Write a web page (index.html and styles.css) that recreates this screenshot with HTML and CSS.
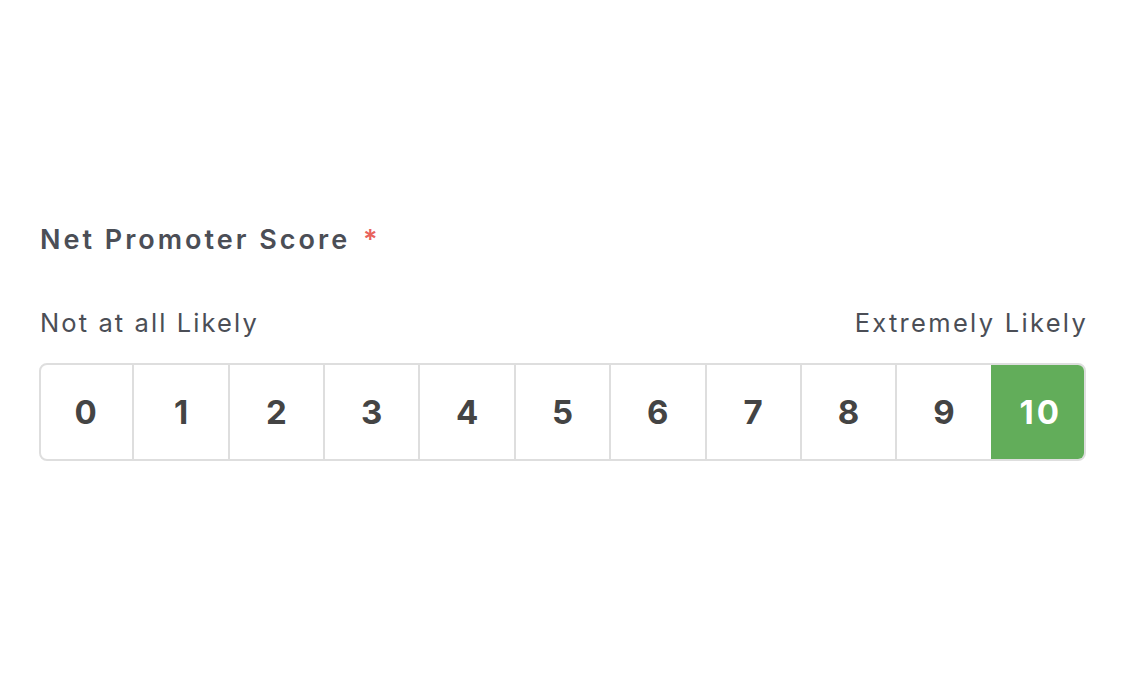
FILE: index.html
```html
<!DOCTYPE html>
<html>
<head>
<meta charset="utf-8">
<link rel="stylesheet" href="styles.css">
</head>
<body>
<div class="field">
  <div class="label">Net Promoter Score <span class="req">*</span></div>
  <div class="ends"><span>Not at all Likely</span><span>Extremely Likely</span></div>
  <div class="scale">
    <div class="row">
      <div class="cell">0</div>
      <div class="cell">1</div>
      <div class="cell">2</div>
      <div class="cell">3</div>
      <div class="cell">4</div>
      <div class="cell">5</div>
      <div class="cell">6</div>
      <div class="cell">7</div>
      <div class="cell">8</div>
      <div class="cell">9</div>
      <div class="cell active">10</div>
    </div>
  </div>
</div>
</body>
</html>
```
FILE: styles.css
```css
html, body {
  margin: 0;
  padding: 0;
  background: #fff;
}
body {
  font-family: Inter, "Noto Sans", sans-serif;
  color: #4b4e56;
}
.field {
  padding: 222px 48px 0 39px;
}
.label {
  font-size: 27px;
  font-weight: 600;
  line-height: 36px;
  letter-spacing: 3px;
  padding-left: 1px;
}
.req {
  color: #e8625c;
  margin-left: 3px;
  letter-spacing: 0;
}
.ends {
  display: flex;
  justify-content: space-between;
  font-size: 25.5px;
  line-height: 36px;
  letter-spacing: 2.1px;
  margin-top: 47px;
  padding-left: 1px;
}
.ends span:last-child {
  margin-right: -2.1px;
  letter-spacing: 2.3px;
}
.scale {
  margin-top: 22px;
  border: 2px solid #dedede;
  border-radius: 8px;
  overflow: hidden;
  height: 94px;
}
.row {
  display: flex;
  height: 100%;
  margin-left: -4px;
  margin-right: -2px;
}
.cell {
  flex: 1;
  display: flex;
  align-items: center;
  justify-content: center;
  font-size: 33px;
  font-weight: 700;
  letter-spacing: 3px;
  padding-left: 3px;
  color: #444444;
  border-left: 2px solid #dedede;
}
.cell.active {
  background: #62ad5a;
  color: #fff;
  border-left-color: #62ad5a;
}
```
